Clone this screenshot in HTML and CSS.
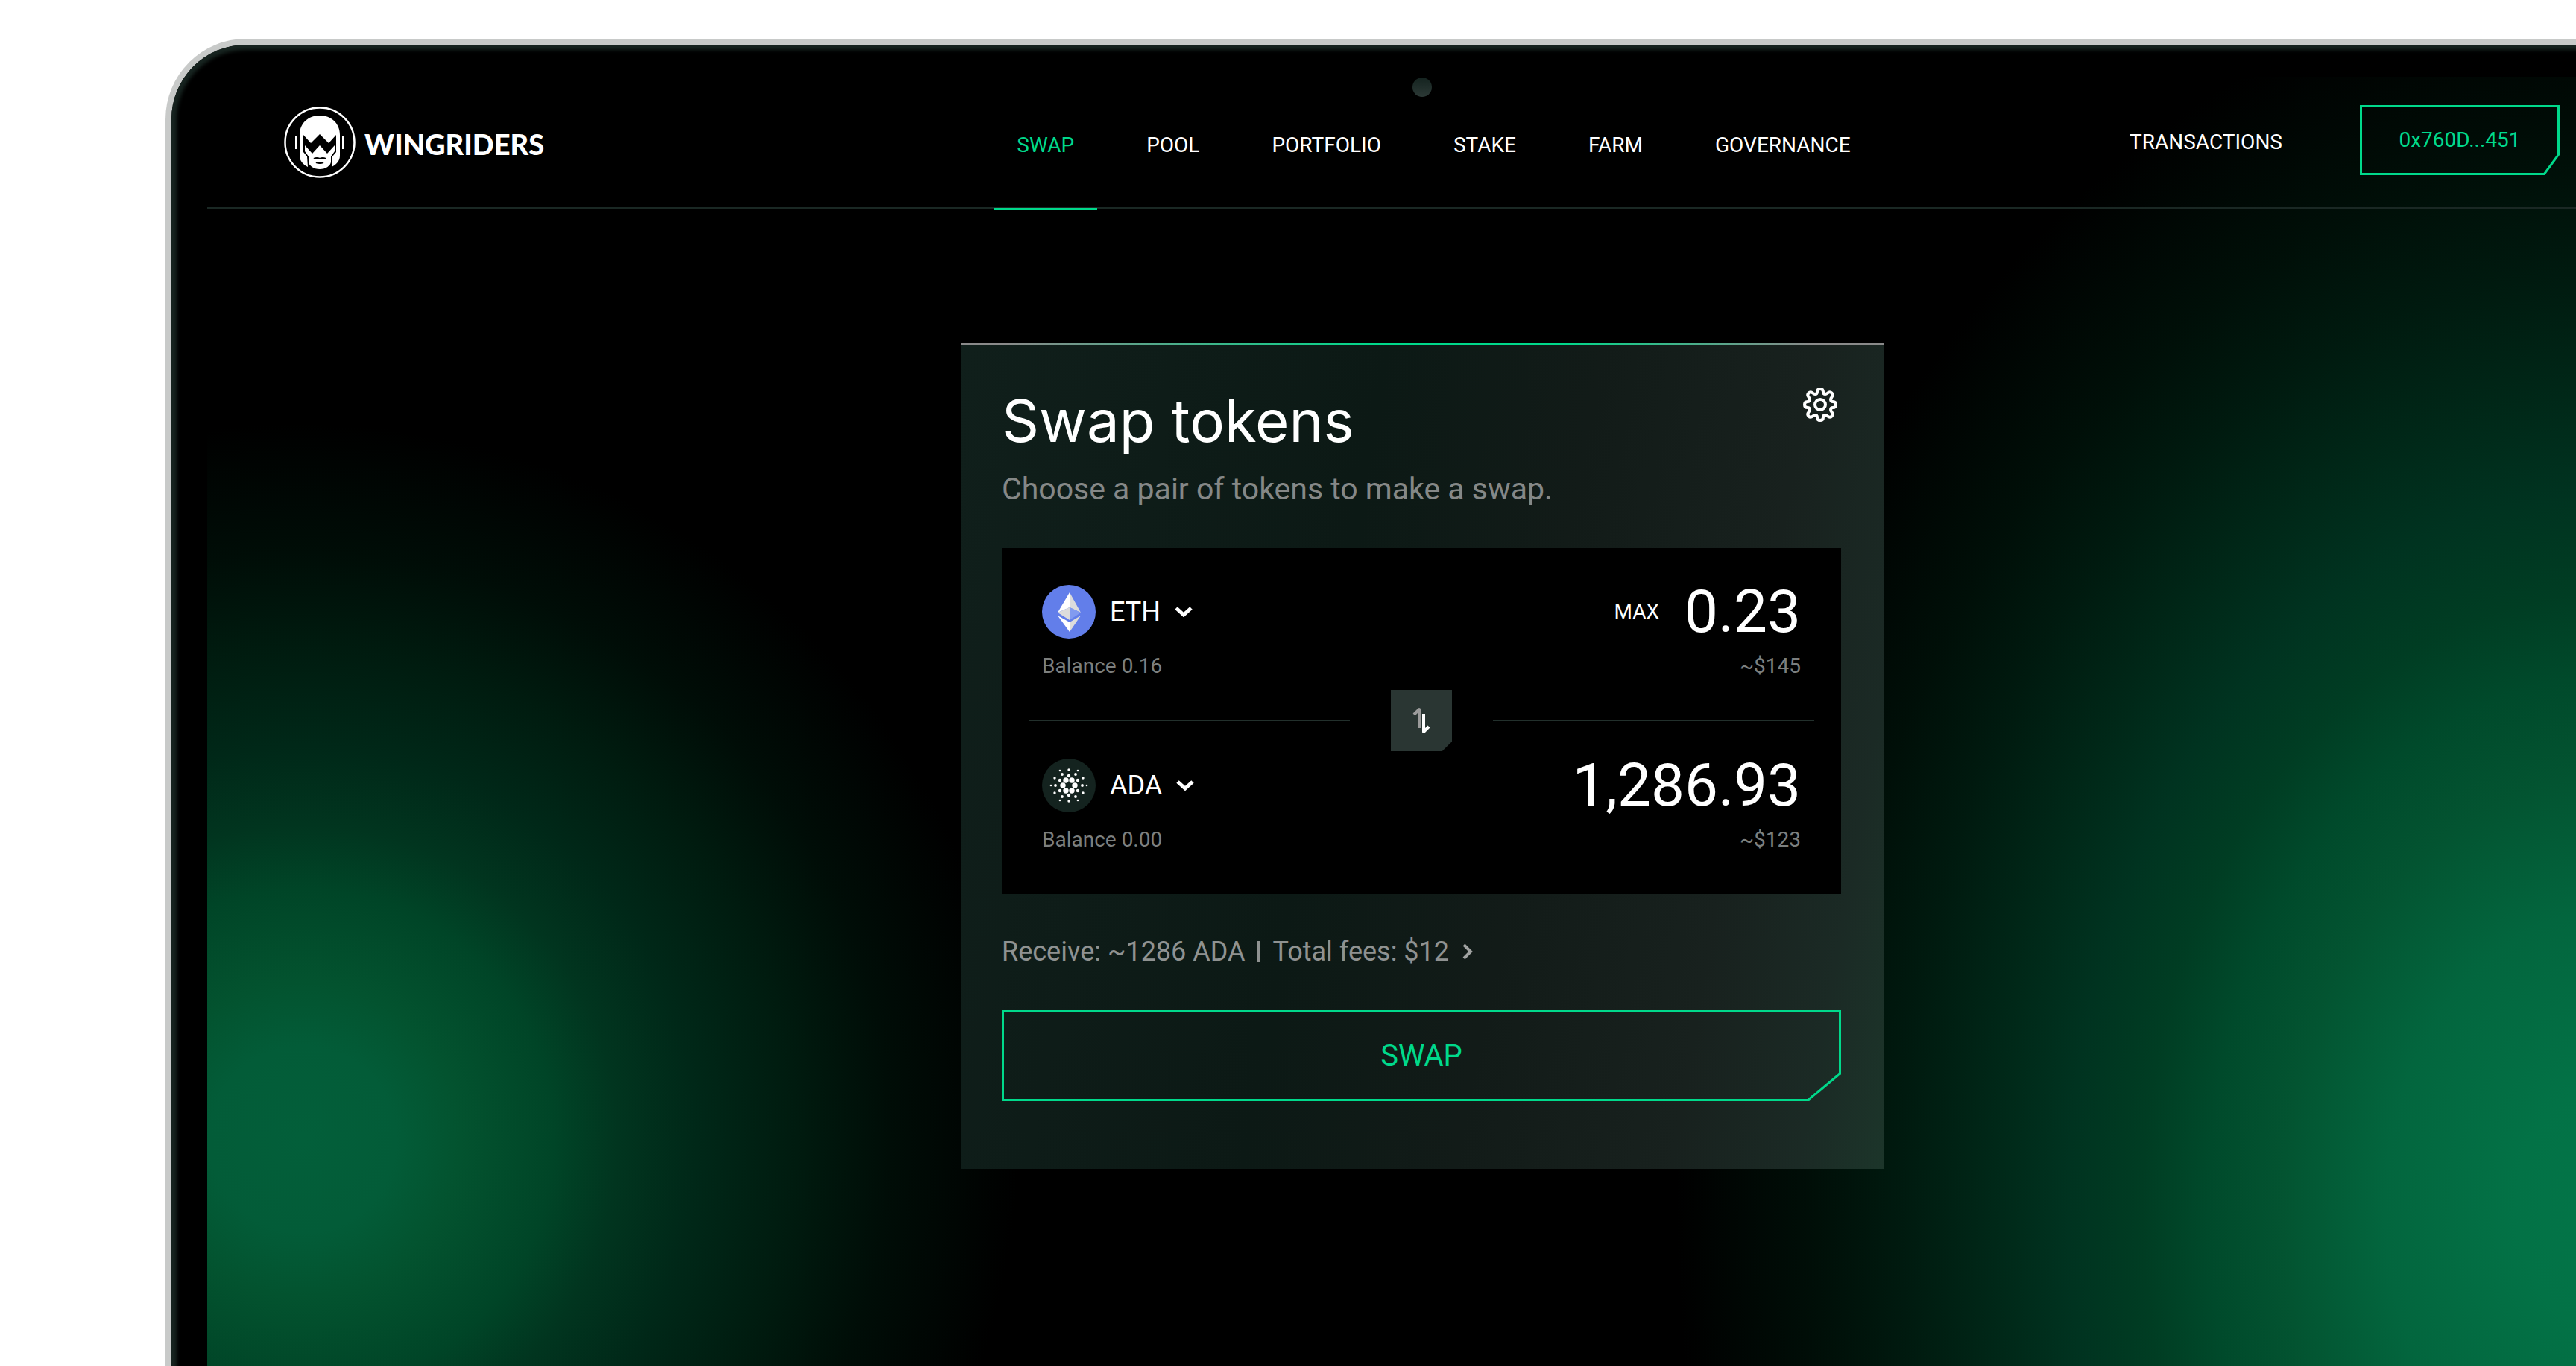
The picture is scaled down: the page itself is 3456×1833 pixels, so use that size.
FILE: index.html
```html
<!DOCTYPE html>
<html lang="en">
<head>
<meta charset="utf-8">
<title>WingRiders – Swap tokens</title>
<link rel="stylesheet" href="styles.css">
</head>
<body>
<div class="device">
  <div class="bezel">
    <span class="camera"></span>
    <div class="screen">
      <header class="header">
        <a class="brand" href="#">
          <svg class="brand-mark" viewBox="0 0 96 96" aria-hidden="true">
            <circle cx="48" cy="48" r="46.500" fill="none" stroke="#fff" stroke-width="2.500"/>
            <path fill="#fff" d="M21 38C21 22 33 12 48 12s27 10 27 26v28c0 7-5 12-11 15l1-14 5-6V38L60 49 48 37 36 49 26 38v23l5 6 1 14c-6-3-11-8-11-15z"/>
            <path fill="#fff" d="M28 52l10 11L48 52l10 11 10-11v8l-5 7v7c0 5-7 10-15 10s-15-5-15-10v-7l-5-7z"/>
            <path fill="#fff" d="M15 39h3v18h-3zM78 39h3v18h-3z"/>
            <path fill="none" stroke="#000" stroke-width="2" d="M40 70q4-2 8 0 4-2 8 0M43 75q5 2 10 0"/>
          </svg>
          <span class="brand-name">WINGRIDERS</span>
        </a>
        <nav class="nav">
          <a class="nav-link is-active" href="#">SWAP</a>
          <a class="nav-link" href="#">POOL</a>
          <a class="nav-link" href="#">PORTFOLIO</a>
          <a class="nav-link" href="#">STAKE</a>
          <a class="nav-link" href="#">FARM</a>
          <a class="nav-link" href="#">GOVERNANCE</a>
        </nav>
        <div class="account">
          <a class="account-link" href="#">TRANSACTIONS</a>
          <button class="wallet" type="button">
            <svg class="outline" viewBox="0 0 268 94" aria-hidden="true"><path d="M1.500 1.500h265v65l-19 26H1.500z"/></svg>
            0x760D...451
          </button>
        </div>
      </header>

      <main class="card">
        <div class="card-head">
          <h1 class="title">Swap tokens</h1>
          <button class="icon-button" type="button" aria-label="Settings">
            <svg class="gear" viewBox="0 0 46 46" aria-hidden="true">
              <path d="M19 6q0-4 4-4t4 4q0 3 3 3 1 0 3-1.500 3-2.500 5.500 0t0 5.500Q37 15 37 16q0 3 3 3 4 0 4 4t-4 4q-3 0-3 3 0 1 1.500 3 2.500 3 0 5.500t-5.500 0Q31 37 30 37q-3 0-3 3 0 4-4 4t-4-4q0-3-3-3-1 0-3 1.500-3 2.500-5.500 0t0-5.500Q9 31 9 30q0-3-3-3-4 0-4-4t4-4q3 0 3-3 0-1-1.500-3-2.500-3 0-5.500t5.500 0Q15 9 16 9q3 0 3-3z"/>
              <circle cx="23" cy="23" r="7"/>
            </svg>
          </button>
        </div>
        <p class="subtitle">Choose a pair of tokens to make a swap.</p>

        <div class="pair">
          <section class="token">
            <div class="token-row">
              <button class="picker" type="button">
                <svg class="coin" viewBox="0 0 72 72" aria-hidden="true">
                  <circle cx="36" cy="36" r="36" fill="#627eea"/>
                  <path fill="#fff" d="M37 10v20L21 37zM37 63V50L21 41z"/>
                  <path fill="#dcdcdc" d="M37 10v20l15 7zM37 30v17L21 37zM37 63V50l15-9z"/>
                  <path fill="#829bf0" d="M37 30v17l15-10z"/>
                </svg>
                ETH
                <svg class="chevron" viewBox="0 0 24 14" aria-hidden="true"><path d="M2 2l10 9L22 2"/></svg>
              </button>
              <div class="amount">
                <button class="max" type="button">MAX</button>
                <input class="value value-short" type="text" value="0.23" aria-label="Amount of ETH to swap">
              </div>
            </div>
            <div class="token-info"><span>Balance 0.16</span><span>~$145</span></div>
          </section>

          <div class="divider">
            <button class="flip" type="button" aria-label="Switch tokens">
              <svg class="flip-icon" viewBox="0 0 26 36" aria-hidden="true">
                <path stroke="#9b9b9b" d="M3 10l7-7v25"/>
                <path stroke="#fff" d="M23 26l-7 7V9"/>
              </svg>
            </button>
          </div>

          <section class="token">
            <div class="token-row">
              <button class="picker" type="button">
                <svg class="coin" viewBox="-36 -36 72 72" aria-hidden="true">
                  <circle r="36" fill="#14231f"/>
                  <g fill="#fff">
                    <circle cx="8" r="3.700"/><circle cx="-8" r="3.700"/><circle cx="4" cy="-7" r="3.700"/><circle cx="-4" cy="-7" r="3.700"/><circle cx="4" cy="7" r="3.700"/><circle cx="-4" cy="7" r="3.700"/>
                    <circle cy="-13" r="2.200"/><circle cy="13" r="2.200"/><circle cx="12" cy="-7" r="2.200"/><circle cx="-12" cy="-7" r="2.200"/><circle cx="12" cy="7" r="2.200"/><circle cx="-12" cy="7" r="2.200"/>
                    <circle cx="18" r="1.900"/><circle cx="-18" r="1.900"/><circle cx="9" cy="-15" r="1.900"/><circle cx="-9" cy="-15" r="1.900"/><circle cx="9" cy="15" r="1.900"/><circle cx="-9" cy="15" r="1.900"/>
                    <circle cy="-21" r="1.700"/><circle cy="21" r="1.700"/><circle cx="19" cy="-10" r="1.700"/><circle cx="-19" cy="-10" r="1.700"/><circle cx="19" cy="10" r="1.700"/><circle cx="-19" cy="10" r="1.700"/>
                    <circle cx="24" r="1.300"/><circle cx="-24" r="1.300"/><circle cx="12" cy="-20" r="1.300"/><circle cx="-12" cy="-20" r="1.300"/><circle cx="12" cy="20" r="1.300"/><circle cx="-12" cy="20" r="1.300"/>
                  </g>
                </svg>
                ADA
                <svg class="chevron" viewBox="0 0 24 14" aria-hidden="true"><path d="M2 2l10 9L22 2"/></svg>
              </button>
              <div class="amount">
                <input class="value" type="text" value="1,286.93" aria-label="Amount of ADA to receive">
              </div>
            </div>
            <div class="token-info"><span>Balance 0.00</span><span>~$123</span></div>
          </section>
        </div>

        <a class="summary" href="#">
          <span>Receive: ~1286 ADA</span><span class="summary-bar"></span><span>Total fees: $12</span>
          <svg class="summary-arrow" viewBox="0 0 14 22" aria-hidden="true"><path d="M2 2l9 9-9 9"/></svg>
        </a>

        <button class="submit" type="button">
          <svg class="outline" viewBox="0 0 1126 123" aria-hidden="true"><path d="M1.500 1.500h1123v84l-43 36H1.500z"/></svg>
          SWAP
        </button>
      </main>
    </div>
  </div>
</div>
</body>
</html>
```
FILE: styles.css
```css
* { box-sizing: border-box; }

:root {
  --green: #00d98b;
  --muted: #7c7f7e;
  --line: #1a2824;
}

body {
  margin: 0;
  height: 100vh;
  display: flex;
  overflow: hidden;
  background: #fff;
  color: #fff;
  font: 400 28px/32px Roboto, sans-serif;
}

a { color: inherit; text-decoration: none; }

button {
  margin: 0;
  padding: 0;
  border: 0;
  background: none;
  color: inherit;
  font: inherit;
  cursor: pointer;
}

svg { display: block; flex: none; }

/* Laptop frame; its right and bottom sides run off the window */
.device {
  flex: 1;
  display: flex;
  margin: 52px -138px -40px 222px;
  padding: 8px 8px 0;
  border-radius: 108px 108px 0 0;
  background: #c8cac9;
}

.bezel {
  position: relative;
  flex: 1;
  display: flex;
  padding: 43px 48px 0;
  border-radius: 100px 100px 0 0;
  background: #000;
  box-shadow: inset 0 0 5px 7px #172420;
}

.camera {
  position: absolute;
  top: 44px;
  left: 50%;
  width: 26px;
  height: 26px;
  margin-left: -13px;
  border-radius: 50%;
  background: linear-gradient(#14231f, #2c3936);
}

.screen {
  flex: 1;
  min-width: 0;
  background:
    radial-gradient(ellipse 1250px 1650px at 3222px 1517px, #037548 0%, #037246 10%, #03663e 24%, #035431 35%, #004a2b 43%, #003d23 50%, #003320 58%, #002818 66%, #001a0f 76%, #000f08 85%, transparent 100%),
    radial-gradient(circle 960px at 128px 1426px, #035f3a 0%, #035c38 13%, #03532f 22%, #004527 35%, #01351f 44%, #002818 55%, #001b0f 69%, #000d07 82%, transparent 100%),
    #000;
}

.header {
  display: grid;
  grid-template-columns: 1fr auto 1fr;
  height: 177px;
  padding: 0 104px 0 103px;
  border-bottom: 2px solid var(--line);
}

.brand {
  display: flex;
  align-items: center;
  gap: 12px;
  padding-bottom: 4px;
}

.brand-mark { width: 96px; height: 96px; }
.brand-name { font: 900 38px/44px Lato, sans-serif; padding-top: 4px; }

.nav { display: flex; gap: 35px; margin-left: 32px; }

.nav-link {
  display: flex;
  align-items: center;
  height: 179px;
  padding: 7px 31px 0;
  border-bottom: 3px solid transparent;
}

.nav-link.is-active { color: var(--green); border-color: var(--green); }

.account {
  display: flex;
  align-items: center;
  justify-content: flex-end;
  gap: 104px;
  padding-bottom: 10px;
}

.account-link { padding-top: 6px; }

.wallet, .submit {
  position: relative;
  color: var(--green);
}

.wallet { width: 268px; height: 94px; }

.outline {
  position: absolute;
  inset: 0;
  width: 100%;
  height: 100%;
  fill: none;
  stroke: var(--green);
  stroke-width: 3;
}

.card {
  width: 1238px;
  margin: 180px auto 0;
  padding: 54px 57px 91px 55px;
  border-top: 3px solid;
  border-image: linear-gradient(90deg, #8a8a8a 5%, var(--green) 45%, var(--green) 65%, #8a8a8a 92%) 1;
  background: linear-gradient(100deg, #101f1b 0%, #0c1915 40%, #121b18 60%, #18211e 80%, #1b2a25 92%, #1c352a 100%);
}

.card-head {
  display: flex;
  justify-content: space-between;
}

.title { margin: 0; font: 400 78px/96px Inter, sans-serif; }

.icon-button { width: 56px; height: 56px; padding: 0 5px 4px; }

.gear { width: 46px; height: 46px; fill: none; stroke: #fff; stroke-width: 4; }

.subtitle {
  margin: 19px 0 0;
  color: #858887;
  font-size: 41px;
  line-height: 48px;
}

.pair {
  margin-top: 55px;
  background: #000;
}

.token { height: 231px; padding: 42px 54px 0; }

.token-row {
  display: flex;
  align-items: center;
  justify-content: space-between;
  height: 88px;
}

.picker {
  display: flex;
  align-items: center;
  gap: 19px;
  font-size: 36px;
}

.coin { width: 72px; height: 72px; }

.chevron { width: 24px; height: 14px; fill: none; stroke: #fff; stroke-width: 5; }

.amount { display: flex; align-items: center; gap: 32px; }

.value {
  width: 400px;
  height: 88px;
  padding: 0;
  border: 0;
  outline: 0;
  background: none;
  color: #fff;
  font: 400 80px/88px Roboto, sans-serif;
  text-align: right;
}

.value-short { width: 158px; }

.token-info {
  display: flex;
  justify-content: space-between;
  padding-top: 13px;
  color: var(--muted);
}

.divider {
  display: flex;
  align-items: center;
  gap: 55px;
  height: 2px;
  padding: 0 36px;
}

.divider::before, .divider::after {
  content: "";
  flex: 1;
  height: 2px;
  background: #22302c;
}

.flip {
  display: grid;
  place-items: center;
  width: 82px;
  height: 82px;
  background: #2a3633;
  clip-path: polygon(0 0, 100% 0, 100% 84%, 84% 100%, 0 100%);
}

.flip-icon { width: 26px; height: 36px; fill: none; stroke-width: 4; stroke-linejoin: round; }

.summary {
  display: flex;
  align-items: center;
  height: 44px;
  margin-top: 56px;
  color: #8f9291;
  font-size: 36px;
}

.summary-bar { width: 3px; height: 28px; margin: 0 17px; background: #8f9291; }
.summary-arrow { width: 14px; height: 22px; margin-left: 18px; fill: none; stroke: #a0a2a1; stroke-width: 4; }

.submit {
  display: block;
  width: 100%;
  height: 123px;
  margin-top: 56px;
  font-size: 40px;
}
```
